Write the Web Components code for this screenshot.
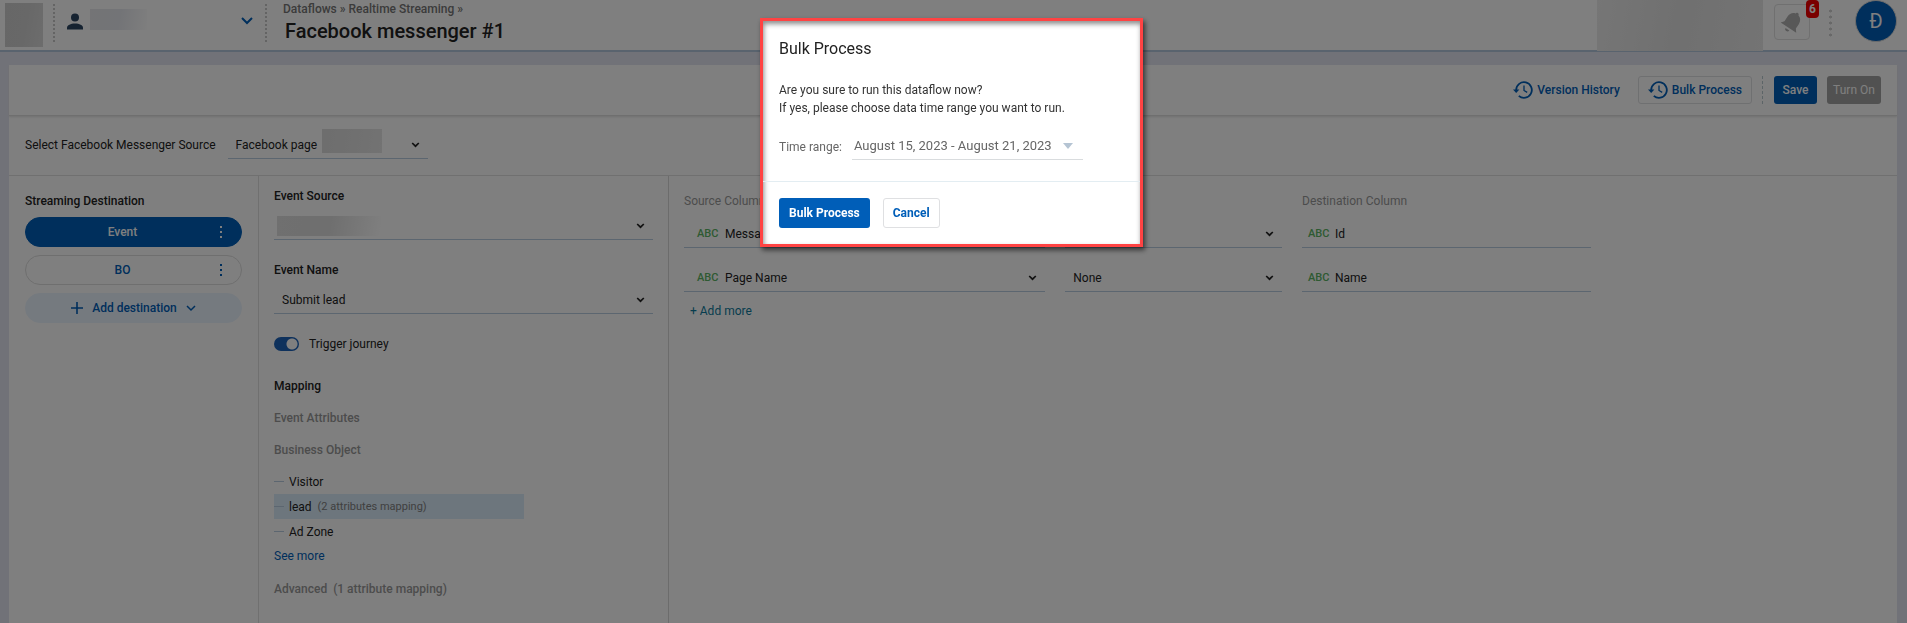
<!DOCTYPE html>
<html lang="en">
<head>
<meta charset="utf-8">
<title>Facebook messenger #1</title>
<style>
body { margin: 0; font: 12px/18px Roboto, "Liberation Sans", sans-serif; color: #222; background: #e3e5f1; }
</style>
</head>
<body>
<dataflow-page></dataflow-page>
<script>
const define = (name, html) => {
  const template = document.createElement('template');
  template.innerHTML = '<style>*{box-sizing:border-box}button,select,input{font:inherit;color:inherit}</style>' + html;
  customElements.define(name, class extends HTMLElement {
    constructor() {
      super();
      this.attachShadow({ mode: 'open' }).append(template.content.cloneNode(true));
    }
    connectedCallback() {
      const root = this.shadowRoot;
      const label = this.getAttribute('label');
      const value = this.getAttribute('value');
      const select = root.querySelector('select');
      const input = root.querySelector('input[type=text]');
      if (select && label) {
        select.add(new Option(value || '', value || ''));
        select.setAttribute('aria-label', label);
      }
      if (input) {
        input.value = value;
        input.setAttribute('aria-label', label);
      }
    }
  });
};

/* Underlined drop-down with an optional type tag in front */
define('field-select', `
<style>
:host { display: grid; grid-template-columns: 1fr; align-items: center; height: 27px; border-bottom: 1px solid #b8cce0; }
select, .lead, svg { grid-area: 1 / 1; }
select { appearance: none; border: 0; background: none; width: 100%; height: 26px; padding: 0 30px 0 8px; margin: 0; }
:host([typed]) select { padding-left: 41px; }
svg { justify-self: end; margin-right: 8px; pointer-events: none; }
.lead { justify-self: start; pointer-events: none; }
</style>
<select></select>
<span class="lead"><slot></slot></span>
<svg width="9" height="6" viewBox="0 0 9 6" fill="none" stroke="#222" stroke-width="1.700"><path d="M1.200 1l3.300 3.200L7.800 1"/></svg>
`);

define('field-text', `
<style>
:host { display: grid; grid-template-columns: 1fr; align-items: center; height: 27px; border-bottom: 1px solid #b8cce0; }
input, .lead { grid-area: 1 / 1; }
input { border: 0; background: none; width: 100%; height: 26px; padding: 0 0 0 33px; }
.lead { justify-self: start; pointer-events: none; }
</style>
<input type="text" readonly>
<span class="lead"><slot></slot></span>
`);

define('type-tag', `
<style>
:host { display: block; color: #5cb565; font-size: 11px; font-weight: 500; margin-left: var(--tag-inset, 13px); }
</style>
<slot></slot>
`);

/* Area of masked content */
define('masked-area', `
<style>
:host { display: block; background: linear-gradient(100deg, var(--from, #e4e4e4), var(--mid, #dedede) 50%, var(--to, #f4f4f4)); }
</style>
`);

define('action-button', `
<style>
:host { display: block; }
button { display: flex; align-items: center; justify-content: center; gap: 4px; width: 100%; height: var(--h, 28px); padding: 0 var(--pad, 8px); margin: 0;
  border: 1px solid transparent; border-radius: 3px; background: none; color: #005eb8; font-weight: 500; white-space: nowrap; }
:host([outlined]) button { border-color: #dfe0e2; }
:host([solid]) button { background: #005eb8; color: #fff; }
:host([off]) button { background: #a2a2a2; color: #fff; font-weight: 400; }
:host([strong]) button { font-weight: 700; }
</style>
<button type="button"><slot name="icon"></slot><slot></slot></button>
`);

define('history-icon', `
<style>:host { display: block; height: 18px; } svg { display: block; }</style>
<svg width="20" height="18" viewBox="0 0 20 18" fill="none" stroke="#005eb8" stroke-width="1.800"><path d="M3.200 9a7.800 7.800 0 1 1 2.600 5.800"/><path d="M11 4.500v5l3.200 1.900" stroke-width="1.300"/><path d="M-.2 8.400h6.600L3.200 12z" fill="#005eb8" stroke="none"/></svg>
`);

define('app-header', `
<style>
:host { display: flex; height: 52px; background: #fff; border-bottom: 2px solid #b2c6dc; padding-left: 5px; padding-right: 10px; }
.logo { width: 38px; height: 44px; margin-top: 3px; margin-right: 10px; --from: #cfcfcf; --mid: #d0d0d0; --to: #dadada; }
.rule { width: 2px; height: 38px; margin-top: 4px; background: repeating-linear-gradient(#c9c9c9 0 2px, transparent 2px 4px); }
.account { display: flex; width: 210px; height: 38px; margin-top: 2px; padding: 0 12px; align-items: center; border: 0; background: none; }
.account masked-area { width: 57px; height: 21px; margin: -3px auto 0 7px; --from: #e8e9ec; --mid: #e6e8ee; --to: #fdfdfd; }
.account svg { display: block; }
.titles { flex: 1; margin-left: 16px; white-space: nowrap; }
nav { font-weight: 500; color: #777; }
nav a { color: inherit; text-decoration: none; }
h1 { margin: 0 0 0 2px; font-size: 20px; line-height: 26px; font-weight: 500; }
.masked { width: 166px; height: 51px; --from: #ececec; --mid: #e0e0e0; --to: #e8e8e8; }
.bell { position: relative; width: 36px; height: 36px; margin: 4px 19px 0 11px; padding: 5px; border: 1px solid #e0e0e0; border-radius: 4px; background: none; }
.bell svg { display: block; }
.count { position: absolute; top: -5px; right: -10px; width: 13px; height: 18px; border-radius: 4px; background: #f40000; color: #fff; font-weight: 700; line-height: 18px; text-align: center; }
.dots { width: 3px; height: 29px; margin: 8px 23px 0 0; background: radial-gradient(circle, #d0d0d0 1.4px, transparent 1.6px) 0 0 / 3px 6px; }
.avatar { width: 42px; height: 42px; border: 1px solid #d9d9d9; border-radius: 50%; background: #005eb8; color: #fff; font-size: 20px; padding: 0; }
</style>
<masked-area class="logo"></masked-area>
<span class="rule"></span>
<button class="account" type="button" aria-label="Account">
<svg width="16" height="17" viewBox="0 0 16 17" fill="#2c4663"><circle cx="8" cy="4.5" r="4"/><path d="M0 16.5v-1.8c0-2.4 3.6-4.2 8-4.2s8 1.800 8 4.200v1.800z"/></svg>
<masked-area></masked-area>
<svg width="12" height="8" viewBox="0 0 12 8" fill="none" stroke="#005eb8" stroke-width="2"><path d="M1 1l5 5 5-5"/></svg>
</button>
<span class="rule"></span>
<div class="titles"><nav><a href="#">Dataflows</a> » <a href="#">Realtime Streaming</a> »</nav><h1>Facebook messenger #1</h1></div>
<masked-area class="masked"></masked-area>
<button class="bell" type="button" aria-label="Notifications"><svg width="24" height="24" viewBox="0 0 24 24" fill="#b0b0b0"><g transform="rotate(33 12 12) translate(-1.500 -1.500) scale(1.130)"><path d="M12 2.500c-.9 0-1.500.6-1.500 1.400C7.700 4.600 6 7 6 10v5l-2.200 2.800h16.400L18 15v-5c0-3-1.700-5.400-4.500-6.100 0-.8-.6-1.400-1.500-1.400z"/><path d="M10 19.500h4a2 2 0 0 1-4 0z"/></g></svg><span class="count">6</span></button>
<span class="dots"></span>
<button class="avatar" type="button">Đ</button>
`);

define('action-bar', `
<style>
:host { display: flex; justify-content: flex-end; align-items: center; height: 51px; padding-right: 16px; border-bottom: 1px solid #dedede; box-shadow: 0 1px 2px #e0e0e0; }
.divider { height: 28px; margin: 0 11px 0 10px; border-left: 1px dashed #b9c9cf; }
.history { margin-right: 9px; }
.bulk { --pad: 9px; }
.save { width: 43px; margin-right: 10px; --pad: 0; }
.turn { width: 54px; --pad: 0; }
</style>
<action-button class="history"><history-icon slot="icon"></history-icon>Version History</action-button>
<action-button class="bulk" outlined><history-icon slot="icon"></history-icon>Bulk Process</action-button>
<span class="divider"></span>
<action-button class="save" solid>Save</action-button>
<action-button class="turn" off>Turn On</action-button>
`);

define('source-row', `
<style>
:host { display: flex; align-items: center; height: 60px; padding: 0 0 1px 16px; border-bottom: 1px solid #e0e0e0; }
field-select { width: 200px; margin-left: 12px; }
masked-area { width: 60px; height: 24px; margin: -3px 0 5px 94px; --from: #dcdcdc; --mid: #e0e0e0; --to: #e6e6e6; }
</style>
<span>Select Facebook Messenger Source</span>
<field-select label="Select Facebook Messenger Source" value="Facebook page"><masked-area></masked-area></field-select>
`);

define('destination-pill', `
<style>
:host { display: flex; position: relative; height: 30px; }
button { border: 1px solid #dedede; border-radius: 15px; background: none; color: #005eb8; font-weight: 500; padding: 0 22px 0 0; width: 100%; display: flex; align-items: center; justify-content: center; gap: 9px; }
:host([active]) button { background: #005eb8; border-color: #005eb8; color: #fff; }
:host([add]) button { background: #ebf5ff; border-color: #ebf5ff; padding: 0; }
.more { position: absolute; right: 20px; top: 9px; color: #005eb8; }
:host([active]) .more { color: #fff; }
:host([add]) .more { display: none; }
</style>
<button type="button"><slot></slot></button>
<svg class="more" width="2" height="12" viewBox="0 0 2 12" fill="currentColor"><path d="M0 0h2v2H0zM0 5h2v2H0zM0 10h2v2H0z"/></svg>
`);

define('destination-list', `
<style>
:host { display: flex; flex-direction: column; gap: 8px; padding: 16px 16px 0; border-right: 1px solid #e0e0e0; }
h2 { margin: 0 0 -1px; font-size: 12px; line-height: 18px; font-weight: 500; }
svg { display: block; }
</style>
<h2>Streaming Destination</h2>
<destination-pill active>Event</destination-pill>
<destination-pill>BO</destination-pill>
<destination-pill add><svg width="12" height="12" viewBox="0 0 12 12" fill="none" stroke="#005eb8" stroke-width="1.600"><path d="M6 0v12M0 6h12"/></svg>Add destination<svg width="10" height="7" viewBox="0 0 10 7" fill="none" stroke="#005eb8" stroke-width="1.500"><path d="M1 1l4 4 4-4"/></svg></destination-pill>
`);

define('event-settings', `
<style>
:host { display: block; padding: 11px 15px 0; border-right: 1px solid #d9d9d9; }
h2 { margin: 0; font-size: 12px; line-height: 18px; font-weight: 500; }
field-select { margin: 8px 0 21px; }
masked-area { width: 104px; height: 20px; margin: 0 0 0 3px; --from: #e0e0e0; --mid: #dedede; --to: #fff; }
.toggle { display: flex; align-items: center; gap: 10px; height: 18px; }
.toggle input { appearance: none; width: 25px; height: 14px; margin: 0; border-radius: 7px; background: radial-gradient(circle at 18px 7px, #fff 5px, transparent 6px) #1d62b8; }
.map { margin-top: 24px; }
.grey { color: #999; margin-top: 14px; }
ul { list-style: none; margin: 10px 0 0; padding: 0; }
li { display: flex; align-items: center; gap: 5px; width: 250px; height: 25px; }
li::before { content: ""; width: 10px; height: 1px; background: #b8cce0; }
li.on { background: #dbedfb; }
small { font-size: 11px; color: #808080; margin-left: 1px; }
a { display: block; line-height: 24px; color: #005eb8; text-decoration: none; }
.last { margin-top: 12px; white-space: pre; }
</style>
<h2>Event Source</h2>
<field-select label="Event Source"><masked-area></masked-area></field-select>
<h2>Event Name</h2>
<field-select label="Event Name" value="Submit lead"></field-select>
<label class="toggle"><input type="checkbox" role="switch" checked>Trigger journey</label>
<h2 class="map">Mapping</h2>
<h2 class="grey">Event Attributes</h2>
<h2 class="grey">Business Object</h2>
<ul><li>Visitor</li><li class="on">lead <small>(2 attributes mapping)</small></li><li>Ad Zone</li></ul>
<a href="#">See more</a>
<h2 class="grey last">Advanced  (1 attribute mapping)</h2>
`);

define('column-mapping', `
<style>
:host { display: block; min-width: 0; padding: 16px 0 0 15px; }
.grid { display: grid; grid-template-columns: 5fr 3fr 4fr; column-gap: 20px; row-gap: 17px; max-width: 907px; }
.head { color: #999; margin-bottom: -6px; }
field-text { --tag-inset: 6px; }
a { display: inline-block; margin: 10px 0 0 6px; color: #0d7a9c; text-decoration: none; }
</style>
<div class="grid">
<span class="head">Source Column</span><span class="head"></span><span class="head">Destination Column</span>
<field-select typed label="Source column 1" value="Message Id"><type-tag>ABC</type-tag></field-select>
<field-select label="Transformation 1" value="None"></field-select>
<field-text label="Destination column 1" value="Id"><type-tag>ABC</type-tag></field-text>
<field-select typed label="Source column 2" value="Page Name"><type-tag>ABC</type-tag></field-select>
<field-select label="Transformation 2" value="None"></field-select>
<field-text label="Destination column 2" value="Name"><type-tag>ABC</type-tag></field-text>
</div>
<a href="#">+ Add more</a>
`);

define('bulk-dialog', `
<style>
:host { position: fixed; inset: 0; display: flex; justify-content: center; align-items: flex-start; padding: 18px 4px 0 0; background: rgba(0, 0, 0, .5); }
section { width: 383px; border: 3px solid #ff4343; background: #fff; box-shadow: 2px 3px 5px rgba(0, 0, 0, .6), inset 1px 3px 5px rgba(0, 0, 0, .45); }
.body { padding: 18px 16px 21px; border-bottom: 1px solid #e3edf2; }
h2 { margin: 0 0 22px; font-size: 16px; line-height: 20px; font-weight: 400; }
p { margin: 0; color: #333; }
.range { display: flex; align-items: center; margin-top: 16px; color: #666; }
.pick { display: grid; align-items: center; width: 231px; margin-left: 10px; border-bottom: 1px solid #d9dcde; }
select { grid-area: 1 / 1; appearance: none; border: 0; background: none; height: 26px; padding: 0 0 0 2px; font-size: 13px; }
.pick svg { grid-area: 1 / 1; justify-self: end; margin-right: 10px; pointer-events: none; }
footer { display: flex; gap: 13px; padding: 16px; --h: 30px; --pad: 9px; }
</style>
<section role="dialog" aria-modal="true" aria-labelledby="title">
<div class="body">
<h2 id="title">Bulk Process</h2>
<p>Are you sure to run this dataflow now?</p>
<p>If yes, please choose data time range you want to run.</p>
<div class="range"><label for="range">Time range:</label><span class="pick"><select id="range"><option>August 15, 2023 - August 21, 2023</option></select><svg width="10" height="6" viewBox="0 0 10 6" fill="#b5c4d3"><path d="M0 0h10L5 6z"/></svg></span></div>
</div>
<footer><action-button solid strong>Bulk Process</action-button><action-button outlined strong>Cancel</action-button></footer>
</section>
`);

define('dataflow-page', `
<style>
:host { display: flex; flex-direction: column; min-height: 100vh; }
main { flex: 1; display: flex; flex-direction: column; margin: 13px 10px 0 9px; background: #fff; }
.columns { flex: 1; display: grid; grid-template-columns: 250px 410px 1fr; }
</style>
<app-header></app-header>
<main>
<action-bar></action-bar>
<source-row></source-row>
<div class="columns"><destination-list></destination-list><event-settings></event-settings><column-mapping></column-mapping></div>
</main>
<bulk-dialog></bulk-dialog>
`);
</script>
</body>
</html>
